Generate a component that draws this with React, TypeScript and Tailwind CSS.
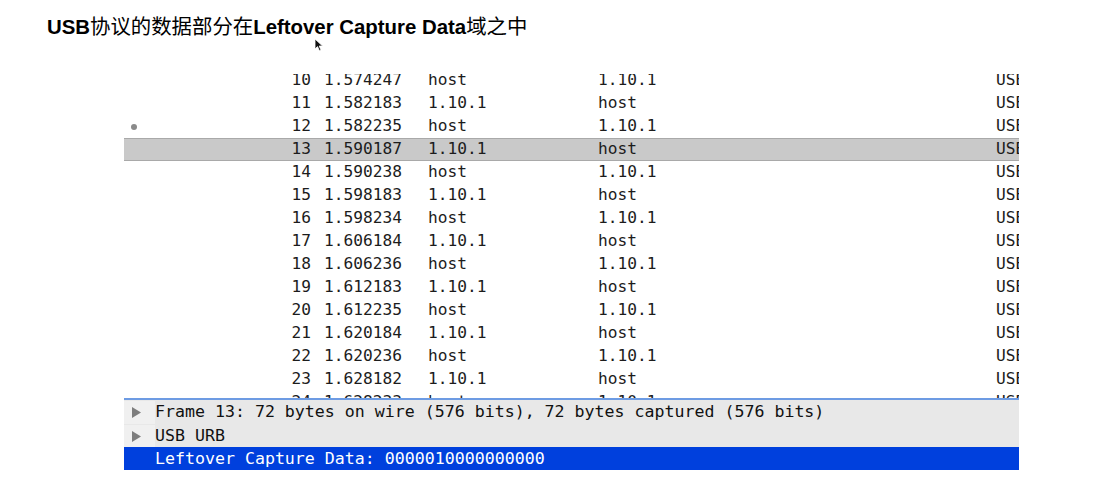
import React from 'react';

type Packet = {
  no: number;
  time: string;
  src: string;
  dst: string;
  proto: string;
};

const packets: Packet[] = [
  { no: 10, time: '1.574247', src: 'host', dst: '1.10.1', proto: 'USB' },
  { no: 11, time: '1.582183', src: '1.10.1', dst: 'host', proto: 'USB' },
  { no: 12, time: '1.582235', src: 'host', dst: '1.10.1', proto: 'USB' },
  { no: 13, time: '1.590187', src: '1.10.1', dst: 'host', proto: 'USB' },
  { no: 14, time: '1.590238', src: 'host', dst: '1.10.1', proto: 'USB' },
  { no: 15, time: '1.598183', src: '1.10.1', dst: 'host', proto: 'USB' },
  { no: 16, time: '1.598234', src: 'host', dst: '1.10.1', proto: 'USB' },
  { no: 17, time: '1.606184', src: '1.10.1', dst: 'host', proto: 'USB' },
  { no: 18, time: '1.606236', src: 'host', dst: '1.10.1', proto: 'USB' },
  { no: 19, time: '1.612183', src: '1.10.1', dst: 'host', proto: 'USB' },
  { no: 20, time: '1.612235', src: 'host', dst: '1.10.1', proto: 'USB' },
  { no: 21, time: '1.620184', src: '1.10.1', dst: 'host', proto: 'USB' },
  { no: 22, time: '1.620236', src: 'host', dst: '1.10.1', proto: 'USB' },
  { no: 23, time: '1.628182', src: '1.10.1', dst: 'host', proto: 'USB' },
  { no: 24, time: '1.628233', src: 'host', dst: '1.10.1', proto: 'USB' },
];

const mono = "font-['DejaVu_Sans_Mono','Liberation_Mono',monospace]";

function Triangle() {
  return (
    <svg width="9" height="11" viewBox="0 0 9 11" className="block">
      <path d="M0 0 L9 5.5 L0 11 Z" fill="#7d7d7d" />
    </svg>
  );
}

export default function App() {
  return (
    <div className="relative w-[1105px] h-[488px] bg-white overflow-hidden">
      <h1 className="pl-[47px] pt-[14px] text-[20.4px] leading-[26px] font-bold text-black font-['Liberation_Sans','Noto_Sans_CJK_SC',sans-serif]">
        USB<span className="font-normal">协议的数据部分在</span>Leftover Capture Data<span className="font-normal">域之中</span>
      </h1>

      {/* mouse pointer */}
      <svg className="absolute left-[314px] top-[38px]" width="10" height="14" viewBox="0 0 10 14">
        <path d="M1 1 L1 11 L3.5 8.6 L5.4 12.8 L7 12 L5.2 8 L8.6 8 Z" fill="#111" stroke="#fff" strokeWidth="0.8" />
      </svg>

      <div className="ml-[124px] w-[895px] mt-[34px]">
        {/* packet list */}
        <div className={`h-[324px] overflow-hidden ${mono} text-[16.2px] text-[#1c1c1c]`}>
          <div className="-mt-[5px]">
            {packets.map((p) => {
              const selected = p.no === 13;
              return (
                <div
                  key={p.no}
                  className={`flex items-center h-[23px] whitespace-nowrap ${
                    selected ? 'bg-[#c9c9c9] border-t border-b border-[#a9a9a9]' : ''
                  }`}
                >
                  <div className="w-[24px] shrink-0 flex justify-center">
                    {p.no === 12 && <div className="w-[6px] h-[6px] rounded-full bg-[#8a8a8a] -ml-[4px]" />}
                  </div>
                  <div className="w-[163px] shrink-0 text-right">{p.no}</div>
                  <div className="w-[13px] shrink-0" />
                  <div className="w-[104px] shrink-0">{p.time}</div>
                  <div className="w-[170px] shrink-0">{p.src}</div>
                  <div className="w-[398px] shrink-0">{p.dst}</div>
                  <div className="shrink-0">{p.proto}</div>
                </div>
              );
            })}
          </div>
        </div>

        <div className="h-[2px] bg-[#6d9be3]" />

        {/* packet details */}
        <div className={`${mono} text-[16.6px] text-[#111]`}>
          <div className="flex items-center h-[24px] bg-[#e8e8e8] pt-[1px]">
            <div className="w-[31px] h-full flex items-center justify-center bg-[#f0f0f0] pr-[6px]">
              <Triangle />
            </div>
            <span className="whitespace-nowrap">Frame 13: 72 bytes on wire (576 bits), 72 bytes captured (576 bits)</span>
          </div>
          <div className="flex items-center h-[23px] bg-[#e8e8e8] pt-[1px]">
            <div className="w-[31px] h-full flex items-center justify-center bg-[#f0f0f0] pr-[6px]">
              <Triangle />
            </div>
            <span>USB URB</span>
          </div>
          <div className="flex items-center h-[23px] bg-[#0040dd] text-white pt-[1px]">
            <div className="w-[31px]" />
            <span className="whitespace-nowrap">Leftover Capture Data: 0000010000000000</span>
          </div>
        </div>
      </div>
    </div>
  );
}
